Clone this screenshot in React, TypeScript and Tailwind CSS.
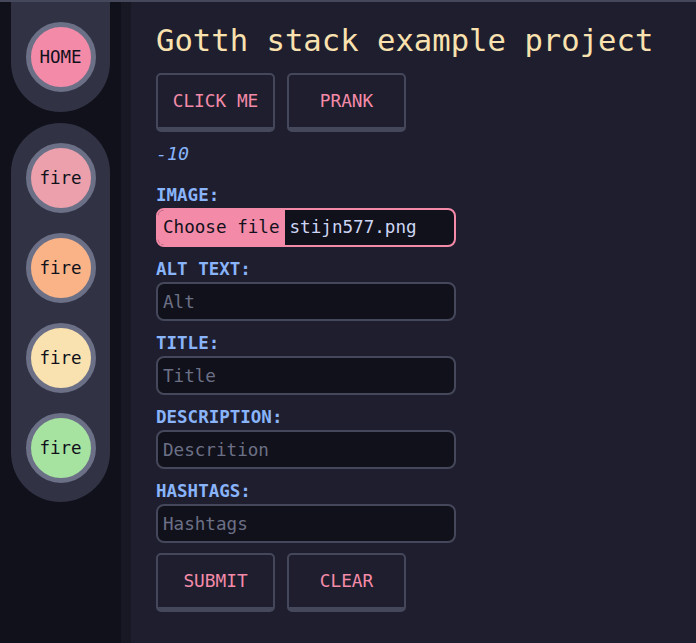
import { useState } from 'react'

const mono = { fontFamily: '"DejaVu Sans Mono", "Liberation Mono", monospace' }

function NavCircle({ label, color }: { label: string; color: string }) {
  return (
    <div
      className={`w-[70px] h-[70px] rounded-full border-[5px] border-[#6c7086] flex items-center justify-center text-[17.5px] text-[#11111b] ${color}`}
    >
      {label}
    </div>
  )
}

function FancyButton({ label, onClick }: { label: string; onClick?: () => void }) {
  return (
    <button
      onClick={onClick}
      className="w-[119px] h-[59px] rounded-[5px] border-2 border-b-[5px] border-[#45475a] bg-[#1e1e2e] text-[#f38ba8] text-[17.8px] flex items-center justify-center"
    >
      {label}
    </button>
  )
}

function Field({ label, placeholder }: { label: string; placeholder: string }) {
  return (
    <div className="flex flex-col mt-[10px]">
      <label className="h-[24px] leading-[24px] text-[17.5px] font-bold text-[#89b4fa]">{label}</label>
      <input
        placeholder={placeholder}
        className="mt-px w-[300px] h-[39px] rounded-lg border-2 border-[#45475a] bg-[#11111b] px-[5px] text-[17.6px] text-[#cdd6f4] placeholder:text-[#6c7086] outline-none"
        style={mono}
      />
    </div>
  )
}

export default function App() {
  const [count, setCount] = useState(-10)

  return (
    <div className="flex h-[643px] w-full bg-[#1e1e2e] border-t-2 border-[#45475a] overflow-hidden" style={mono}>
      {/* Sidebar */}
      <div className="w-[121px] shrink-0 bg-[#11111b] pl-[11px] flex flex-col">
        <div className="w-[99px] h-[110px] bg-[#313244] rounded-b-full flex justify-center pt-[20px]">
          <NavCircle label="HOME" color="bg-[#f38ba8]" />
        </div>
        <div className="w-[99px] mt-[11px] bg-[#313244] rounded-full flex flex-col items-center gap-[20px] pt-[20px] pb-[19px]">
          <NavCircle label="fire" color="bg-[#eba0ac]" />
          <NavCircle label="fire" color="bg-[#fab387]" />
          <NavCircle label="fire" color="bg-[#f9e2af]" />
          <NavCircle label="fire" color="bg-[#a6e3a1]" />
        </div>
      </div>
      <div className="w-[10px] shrink-0 bg-[#181825]" />

      {/* Main */}
      <div className="flex-1 pl-[25px] pt-[21px] flex flex-col">
        <h1 className="h-[36px] leading-[36px] text-[30.6px] text-[#f9e2af]">Gotth stack example project</h1>

        <div className="flex gap-[12px] mt-[14px]">
          <FancyButton label="CLICK ME" onClick={() => setCount(c => c + 1)} />
          <FancyButton label="PRANK" onClick={() => setCount(c => c - 1)} />
        </div>

        <p className="mt-[10px] h-[24px] leading-[24px] text-[18.3px] italic text-[#89b4fa]">{count}</p>

        <div className="flex flex-col mt-[17px]">
          <label className="h-[24px] leading-[24px] text-[17.5px] font-bold text-[#89b4fa]">IMAGE:</label>
          <div className="mt-px w-[300px] h-[39px] rounded-lg border-2 border-[#f38ba8] bg-[#11111b] flex items-stretch overflow-hidden">
            <span className="bg-[#f38ba8] text-[#11111b] px-[5px] flex items-center text-[17.6px]">Choose file</span>
            <span className="pl-[5px] flex items-center text-[17.6px] text-[#cdd6f4]">stijn577.png</span>
          </div>
        </div>

        <Field label="ALT TEXT:" placeholder="Alt" />
        <Field label="TITLE:" placeholder="Title" />
        <Field label="DESCRIPTION:" placeholder="Descrition" />
        <Field label="HASHTAGS:" placeholder="Hashtags" />

        <div className="flex gap-[12px] mt-[10px]">
          <FancyButton label="SUBMIT" />
          <FancyButton label="CLEAR" />
        </div>
      </div>
    </div>
  )
}
